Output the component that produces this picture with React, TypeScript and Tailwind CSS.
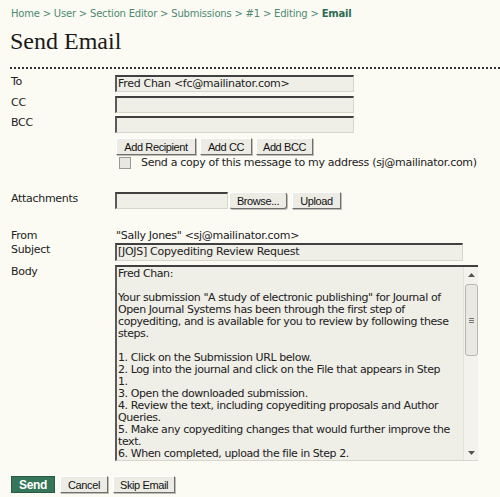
import React from "react";

const inputCls =
  "h-[17px] bg-[#efeee7] border-t-2 border-l-2 border-t-[#404040] border-l-[#5a5a5a] border-r border-b border-r-[#d8d6cc] border-b-[#d8d6cc] px-[1px] leading-[13px] text-[11px] tracking-[-0.3px] text-[#222] whitespace-nowrap overflow-hidden";

const btnCls =
  "h-[17px] px-0 flex items-center justify-center whitespace-nowrap bg-[#ecebe4] border border-t-[#ffffff] border-l-[#ffffff] border-r-[#6f6f6f] border-b-[#6f6f6f] shadow-[1px_1px_0_#bdbdb5] text-[11px] leading-[14px] tracking-[-0.4px] text-[#111] [font-family:'Liberation_Sans',Arial,sans-serif]";

const labelCls = "w-[115px] shrink-0 pl-[11px] leading-[13px] tracking-[-0.3px]";

const bodyLines = [
  "Fred Chan:",
  "",
  'Your submission "A study of electronic publishing" for Journal of',
  "Open Journal Systems has been through the first step of",
  "copyediting, and is available for you to review by following these",
  "steps.",
  "",
  "1. Click on the Submission URL below.",
  "2. Log into the journal and click on the File that appears in Step",
  "1.",
  "3. Open the downloaded submission.",
  "4. Review the text, including copyediting proposals and Author",
  "Queries.",
  "5. Make any copyediting changes that would further improve the",
  "text.",
  "6. When completed, upload the file in Step 2.",
  "7. Click on METADATA to check indexing information for",
];

export default function App() {
  return (
    <div className="w-[500px] h-[497px] overflow-hidden bg-[#fbfaf3] text-[#222] [font-family:'DejaVu_Sans',Verdana,sans-serif] text-[11px]">
      <div className="pl-[11px] pt-[7px] h-[13px] leading-[13px] text-[10px] tracking-[-0.2px] text-[#4f8a72] whitespace-nowrap">
        Home &gt; User &gt; Section Editor &gt; Submissions &gt; #1 &gt; Editing &gt;{" "}
        <span className="font-bold text-[#2f6b54]">Email</span>
      </div>
      <h1 className="pl-[10px] mt-[14px] h-[28px] leading-[28px] text-[24px] text-[#1a1a1a] [font-family:'Liberation_Serif','Times_New_Roman',serif] whitespace-nowrap">
        Send Email
      </h1>
      <div className="ml-[10px] mt-[12px] border-t-2 border-dotted border-[#333] w-[490px]" />

      <div className="mt-[6px]">
        <div className="flex items-start h-[21px]">
          <div className={labelCls}>To</div>
          <div className={`${inputCls} w-[239px]`}>Fred Chan &lt;fc@mailinator.com&gt;</div>
        </div>
        <div className="flex items-start h-[20px]">
          <div className={labelCls}>CC</div>
          <div className={`${inputCls} w-[239px]`} />
        </div>
        <div className="flex items-start h-[22px]">
          <div className={labelCls}>BCC</div>
          <div className={`${inputCls} w-[239px]`} />
        </div>
        <div className="flex items-start h-[18px]">
          <div className="w-[116px] shrink-0" />
          <div className="flex gap-[4px]">
            <button className={`${btnCls} w-[80px]`}>Add Recipient</button>
            <button className={`${btnCls} w-[52px]`}>Add CC</button>
            <button className={`${btnCls} w-[57px]`}>Add BCC</button>
          </div>
        </div>
        <div className="flex items-center h-[13px]">
          <div className="w-[119px] shrink-0" />
          <div className="w-[12px] h-[12px] shrink-0 border border-[#9a9a94] bg-[#e8e7e0]" />
          <div className="ml-[10px] leading-[13px] tracking-[-0.3px] whitespace-nowrap">
            Send a copy of this message to my address (sj@mailinator.com)
          </div>
        </div>

        <div className="flex items-start mt-[23px] h-[17px]">
          <div className={labelCls}>Attachments</div>
          <div className={`${inputCls} w-[113px] h-[16px]`} />
          <button className={`${btnCls} ml-[1px] w-[58px] rounded-[3px] border-[#7a7a7a]`}>Browse...</button>
          <button className={`${btnCls} ml-[5px] w-[49px]`}>Upload</button>
        </div>

        <div className="flex items-start mt-[20px] h-[14px]">
          <div className={labelCls}>From</div>
          <div className="pl-[1px] leading-[13px] tracking-[-0.3px] whitespace-nowrap">
            "Sally Jones" &lt;sj@mailinator.com&gt;
          </div>
        </div>
        <div className="flex items-start h-[22px]">
          <div className={labelCls}>Subject</div>
          <div className={`${inputCls} w-[348px] h-[18px]`}>[JOJS] Copyediting Review Request</div>
        </div>
        <div className="flex items-start">
          <div className={labelCls}>Body</div>
          <div className="flex w-[363px] h-[196px] border-t-2 border-l-2 border-t-[#404040] border-l-[#5a5a5a] border-b border-b-[#d8d6cc] bg-[#efeee7] overflow-hidden">
            <div className="flex-1 pl-[1px] pt-[1px] leading-[12px] tracking-[-0.42px] whitespace-pre overflow-hidden">
              {bodyLines.map((l, i) => (
                <div key={i} className="h-[12px]">{l}</div>
              ))}
            </div>
            <div className="w-[15px] shrink-0 h-full bg-[#f3f2ed] flex flex-col items-center border-l border-[#e4e3dc]">
              <div className="h-[15px] w-full flex items-center justify-center">
                <svg width="7" height="4" viewBox="0 0 7 4"><path d="M0 4 L3.5 0 L7 4 Z" fill="#555" /></svg>
              </div>
              <div className="mt-[2px] w-[13px] h-[72px] rounded-[3px] border border-[#b9b8b0] bg-[#e9e8e2] flex flex-col items-center justify-center gap-[1px]">
                <div className="w-[5px] h-[1px] bg-[#777]" />
                <div className="w-[5px] h-[1px] bg-[#777]" />
                <div className="w-[5px] h-[1px] bg-[#777]" />
              </div>
              <div className="flex-1" />
              <div className="h-[15px] w-full flex items-center justify-center">
                <svg width="7" height="4" viewBox="0 0 7 4"><path d="M0 0 L3.5 4 L7 0 Z" fill="#555" /></svg>
              </div>
            </div>
          </div>
        </div>

        <div className="flex gap-[5px] pl-[11px] mt-[15px]">
          <button className="h-[17px] w-[44px] bg-[#357558] border border-[#2a5a44] text-white font-bold text-[12px] leading-[14px] [font-family:'Liberation_Sans',Arial,sans-serif] tracking-[-0.3px]">
            Send
          </button>
          <button className={`${btnCls} w-[48px]`}>Cancel</button>
          <button className={`${btnCls} w-[62px]`}>Skip Email</button>
        </div>
      </div>
    </div>
  );
}
